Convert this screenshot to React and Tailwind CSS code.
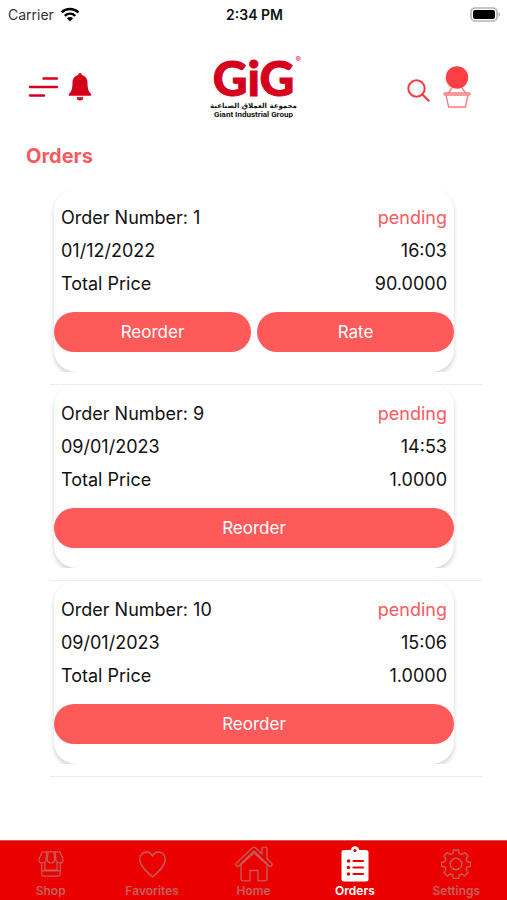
import clsx from "clsx";

const orders = [
  { id: 1, date: "01/12/2022", time: "16:03", total: "90.0000", status: "pending", canRate: true },
  { id: 9, date: "09/01/2023", time: "14:53", total: "1.0000", status: "pending", canRate: false },
  { id: 10, date: "09/01/2023", time: "15:06", total: "1.0000", status: "pending", canRate: false },
];

const tabs = [
  { label: "Shop", Icon: ShopIcon },
  { label: "Favorites", Icon: HeartIcon },
  { label: "Home", Icon: HomeIcon },
  { label: "Orders", Icon: ClipboardIcon, active: true },
  { label: "Settings", Icon: GearIcon },
];

function WifiIcon() {
  return (
    <svg width="20" height="15" viewBox="0 0 20 15" aria-hidden="true">
      <g fill="none" stroke="#000" strokeWidth="2.4">
        <path d="M1.6 5.4a12 12 0 0 1 16.8 0" />
        <path d="M4.8 8.8a7.4 7.4 0 0 1 10.4 0" />
      </g>
      <path d="M10 14.4l-3.1-3.2a4.4 4.4 0 0 1 6.2 0z" fill="#000" />
    </svg>
  );
}

function BatteryIcon() {
  return (
    <svg width="31" height="15" viewBox="0 0 31 15" aria-hidden="true">
      <rect x="1" y="1" width="26" height="13" rx="4" fill="#fff" stroke="#b5b5b5" strokeWidth="1.6" />
      <rect x="3" y="3" width="22" height="9" rx="2" fill="#000" />
      <path d="M28.5 5.2v4.6c1-.4 1.7-1.2 1.7-2.3s-.7-1.9-1.7-2.3z" fill="#b5b5b5" />
    </svg>
  );
}

function MenuIcon() {
  return (
    <svg width="30" height="22" viewBox="0 0 30 22" fill="none" stroke="#d5001c" strokeWidth="2.4" strokeLinecap="round">
      <path d="M15.5 2.5H29M2 11H29M2 19.5H16" />
    </svg>
  );
}

function BellIcon() {
  return (
    <svg width="24" height="28" viewBox="0 0 24 28" fill="#d5001c">
      <path d="M12 0c1.100 0 1.800.8 1.800 1.900 3.600.9 5.700 3.700 5.700 7.600 0 5.800.9 8.900 3.400 11.200.9.900.4 2.100-.8 2.100H1.900c-1.200 0-1.700-1.200-.8-2.100C3.600 18.400 4.500 15.300 4.500 9.500c0-3.900 2.100-6.700 5.700-7.600C10.200.8 10.900 0 12 0z" />
      <path d="M8.700 24.200h6.600a3.300 3.300 0 0 1-6.600 0z" />
    </svg>
  );
}

function SearchIcon() {
  return (
    <svg width="24" height="24" viewBox="0 0 24 24" fill="none" stroke="#f93a41" strokeLinecap="round">
      <circle cx="9.5" cy="9.5" r="8.2" strokeWidth="2" />
      <path d="M15.5 15.5l6.2 6.2" strokeWidth="2.2" />
    </svg>
  );
}

function BasketIcon() {
  return (
    <svg width="28" height="42" viewBox="0 0 28 42" fill="none" stroke="#f97a7e" strokeWidth="1.3" strokeLinejoin="round">
      <path d="M9 22l-4 5.500M19 22l4 5.500" />
      <rect x="1" y="27" width="26" height="2" rx="1" />
      <path d="M3 29l2.600 12h16.800l2.600-12" />
      <circle cx="14" cy="11.5" r="11.2" fill="#fc3f44" stroke="none" />
    </svg>
  );
}

function ShopIcon() {
  return (
    <svg width="26" height="28" viewBox="0 0 28 28" fill="none" stroke="currentColor" strokeWidth="1.3" strokeLinejoin="round">
      <path d="M5.500 1h17c.8 0 1.300.4 1.600 1.200L27 9.300c.3 2-1.200 3.600-3.400 3.600-2.400 0-4-1.300-4.400-3.600L18.600 1M5.500 1c-.8 0-1.300.4-1.600 1.200L1 9.300c-.3 2 1.200 3.600 3.400 3.600 2.400 0 4-1.300 4.400-3.600L9.400 1" />
      <path d="M11 1L10 9c0 2.400 1.600 3.900 4 3.900s4-1.500 4-3.900l-1-8" />
      <path d="M4 13v12c0 1.300.7 2 2 2h16c1.300 0 2-.7 2-2V13M7.500 13v7.500h13V13M4 21.500h20" />
    </svg>
  );
}

function HeartIcon() {
  return (
    <svg width="27" height="27" viewBox="0 0 27 27" fill="none" stroke="currentColor" strokeWidth="1.3" strokeLinejoin="round">
      <path d="M13.500 26C7 20.500.8 14.800.8 8.300.8 4 3.800 1 7.400 1c2.700 0 5 1.500 6.100 4.200C14.600 2.500 16.900 1 19.600 1c3.600 0 6.600 3 6.600 7.300 0 6.500-6.200 12.200-12.700 17.700z" />
    </svg>
  );
}

function HomeIcon() {
  return (
    <svg width="38" height="36" viewBox="0 0 38 36" fill="none" stroke="currentColor" strokeWidth="1.3" strokeLinejoin="round">
      <path d="M19 1.200c.7 0 1.300.3 1.800.8l6.200 6V2.500c0-.8.500-1.300 1.300-1.300h2.400c.8 0 1.300.5 1.300 1.300v10l4.600 4.600c1.700 1.800-.8 4.300-2.600 2.600L19 5 4 19.700c-1.800 1.700-4.300-.8-2.600-2.600L17.200 2c.5-.5 1.100-.8 1.800-.8z" />
      <path d="M6 18.500V33c0 1.200.7 1.800 1.800 1.800h7.200V24.500h8v10.300h7.200c1.100 0 1.800-.6 1.800-1.800V18.500L19 6.800z" />
    </svg>
  );
}

function ClipboardIcon() {
  return (
    <svg width="28" height="36" viewBox="0 0 28 36">
      <rect x="0.5" y="4" width="27" height="31.5" rx="2.5" fill="#fff" />
      <circle cx="14" cy="4.5" r="4.2" fill="#fff" />
      <circle cx="14" cy="4.5" r="1.6" fill="#eb0000" />
      <path d="M12.500 15h9.500M12.500 21.500h9.500M12.500 28h9.500" stroke="#eb0000" strokeWidth="2.2" strokeLinecap="round" />
      <g fill="#eb0000">
        <circle cx="7.5" cy="15" r="1.8" />
        <circle cx="7.5" cy="21.5" r="1.8" />
        <circle cx="7.5" cy="28" r="1.8" />
      </g>
    </svg>
  );
}

function GearIcon() {
  return (
    <svg width="30" height="30" viewBox="0 0 30 30" fill="none" stroke="currentColor" strokeWidth="1.4" strokeLinejoin="round">
      <path d="M12.600 1h4.800l.8 3.700 2.300 1 3.200-2.100 3.300 3.300-2 3.200 1 2.400 3.600.7v4l-3.600.9-1 2.400 2 3.200-3.300 3.300-3.200-2-2.300 1-.8 3.600h-4.800l-.8-3.600-2.300-1-3.200 2L3 23.700l2-3.200-1-2.400-3.600-.9v-4l3.600-.7 1-2.400-2-3.200 3.300-3.300 3.200 2.100 2.300-1z" />
      <circle cx="15" cy="15" r="5.8" />
    </svg>
  );
}

function StatusBar() {
  return (
    <div className="grid grid-cols-3 items-center h-7 pl-2 pr-1.5 text-[14px]">
      <div className="flex items-center gap-1.5">
        <span className="text-[#333]">Carrier</span>
        <WifiIcon />
      </div>
      <span className="text-center font-semibold">2:34 PM</span>
      <div className="flex justify-end">
        <BatteryIcon />
      </div>
    </div>
  );
}

function Logo() {
  return (
    <div className="relative flex flex-col items-center w-fit mx-auto">
      <span className="font-['Lato',sans-serif] font-black text-[48px] leading-[46px] text-[#d5001c] [-webkit-text-stroke:1px_#d5001c]">
        GiG
      </span>
      <span className="absolute -right-1 top-0 text-[8px] leading-[8px] text-[#d5001c]">®</span>
      <span lang="ar" dir="rtl" className="font-['DejaVu_Sans',sans-serif] font-bold text-[7px] leading-[10px] whitespace-nowrap">
        مجموعة العملاق الصناعية
      </span>
      <span className="font-['Roboto',sans-serif] font-bold text-[8px] leading-[8px] whitespace-nowrap">
        Giant Industrial Group
      </span>
    </div>
  );
}

function Header() {
  return (
    <header className="grid grid-cols-3 items-center h-[92px] pt-[26px] px-7">
      <div className="flex items-center gap-2.5">
        <button aria-label="Menu">
          <MenuIcon />
        </button>
        <button aria-label="Notifications">
          <BellIcon />
        </button>
      </div>
      <Logo />
      <div className="flex items-center justify-end gap-3 pr-2">
        <button aria-label="Search" className="pt-2">
          <SearchIcon />
        </button>
        <button aria-label="Basket">
          <BasketIcon />
        </button>
      </div>
    </header>
  );
}

function ActionButton({ children }) {
  return (
    <button className="flex-1 h-10 pt-0.5 rounded-[20px] bg-[#ff5a5a] text-white text-[17px]">
      {children}
    </button>
  );
}

function OrderCard({ order }) {
  return (
    <li className="pb-3 border-b border-[#ececec]">
      {/* the list row cuts the shadow off below the card */}
      <div className="overflow-hidden pl-1 pr-7">
        <article className="rounded-[22px] bg-white pt-3 pb-5 shadow-[0_3px_5px_rgba(0,0,0,0.18)]">
          <div className="px-[7px] text-[18px] leading-[33px]">
            <div className="flex justify-between">
              <span>Order Number: {order.id}</span>
              <span className="text-[#f95a5e]">{order.status}</span>
            </div>
            <div className="flex justify-between">
              <span>{order.date}</span>
              <span>{order.time}</span>
            </div>
            <div className="flex justify-between">
              <span>Total Price</span>
              <span>{order.total}</span>
            </div>
          </div>
          <div className="flex gap-1.5 mt-3">
            <ActionButton>Reorder</ActionButton>
            {order.canRate && <ActionButton>Rate</ActionButton>}
          </div>
        </article>
      </div>
    </li>
  );
}

function TabBar() {
  return (
    <nav className="flex h-[60px] bg-[#eb0000] border-t border-[#e05050]">
      {tabs.map(({ label, Icon, active }) => (
        <a
          key={label}
          href="#"
          className={clsx(
            "flex-1 flex flex-col items-center text-[12px] leading-[16px] font-semibold",
            active ? "text-white" : "text-[#c2605c]"
          )}
        >
          <span className="flex h-[42px] items-center pt-1">
            <Icon />
          </span>
          {label}
        </a>
      ))}
    </nav>
  );
}

export default function App() {
  return (
    <div className="flex flex-col min-h-screen bg-white text-[#111] font-['Inter',sans-serif]">
      <StatusBar />
      <Header />
      <main className="flex-1">
        <h1 className="pl-[26px] pt-5 text-[20px] leading-[32px] font-bold text-[#f95a5e]">Orders</h1>
        <ul className="mt-[17px] ml-[50px] mr-[25px]">
          {orders.map((order) => (
            <OrderCard key={order.id} order={order} />
          ))}
        </ul>
      </main>
      <TabBar />
    </div>
  );
}
